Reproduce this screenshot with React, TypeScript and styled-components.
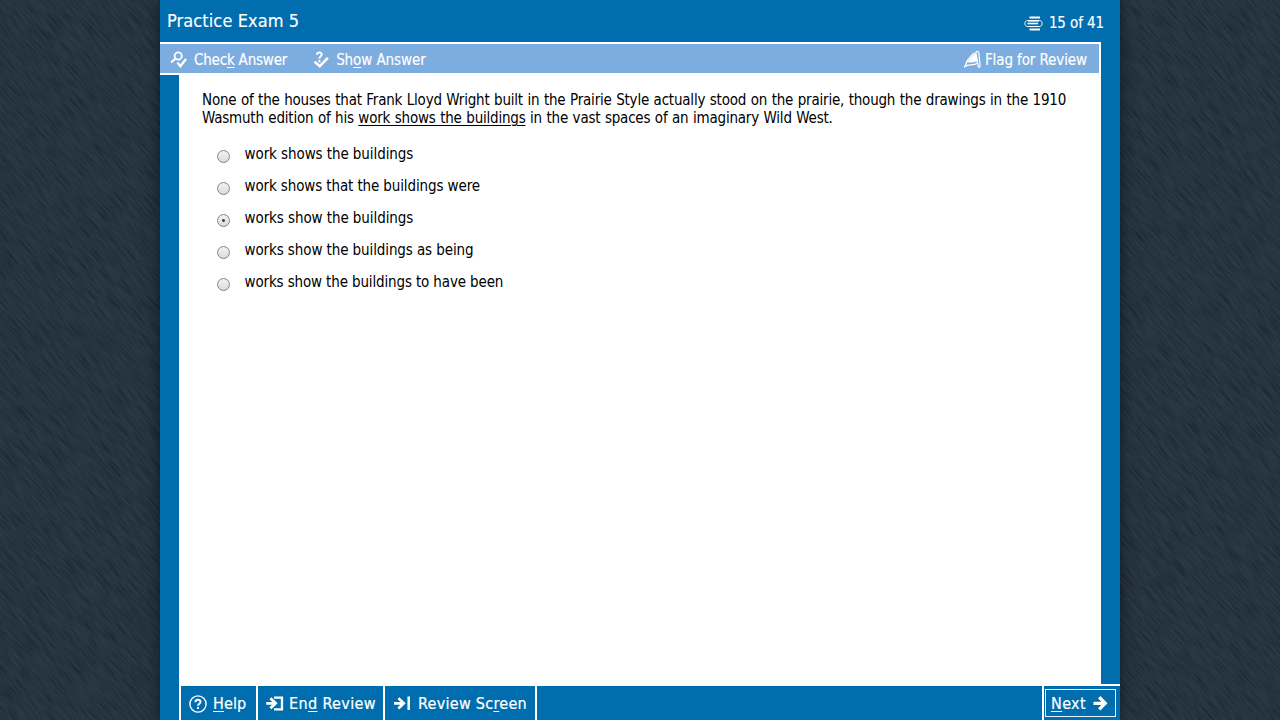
import React from "react";
import styled, { createGlobalStyle } from "styled-components";

const BLUE = "#006daf";
const LIGHT = "#7dacdf";

const Global = createGlobalStyle`
  * { box-sizing: border-box; }
  body { margin: 0; background: #283642; font-family: "DejaVu Sans Condensed", Tahoma, "DejaVu Sans", sans-serif; font-stretch: condensed; overflow: hidden; }
`;

const Desk = styled.div`
  position: relative;
  height: 720px;
  display: flex;
  justify-content: center;
  overflow: hidden;
  background: #283844;
`;

const Texture = styled.svg`
  position: absolute;
  left: -160px;
  top: -440px;
  width: 1600px;
  height: 1600px;
  transform: rotate(49deg);
`;

const Frame = styled.div`
  position: relative;
  width: 960px;
  height: 720px;
  display: flex;
  flex-direction: column;
  background: ${BLUE};
  box-shadow: 0 0 14px rgba(0, 0, 0, 0.55);
`;

const Header = styled.header`
  height: 42px;
  display: flex;
  justify-content: space-between;
  padding: 0 16px 0 7px;
  color: #fff;
  -webkit-text-stroke: 0.15px #fff;
`;

const Label = styled.span<{ $size: number; $spacing?: number }>`
  font-size: ${(p) => p.$size}px;
  letter-spacing: ${(p) => p.$spacing ?? 0}px;
  white-space: nowrap;
  u { text-underline-offset: 2px; text-decoration-thickness: 1px; }
`;

const Title = styled(Label)`
  line-height: 42px;
`;

const Progress = styled.div`
  display: flex;
  align-items: center;
  gap: 6px;
  padding-top: 4px;
`;

const Toolbar = styled.nav`
  width: 941px;
  height: 33px;
  display: flex;
  align-items: center;
  padding: 3px 12px 0 10px;
  border: 2px solid #fff;
  border-left: 0;
  background: ${LIGHT};
  color: #fff;
  -webkit-text-stroke: 0.15px #fff;

  svg { margin-top: -1px; }
`;

const Action = styled.div<{ $gap: number; $end?: boolean }>`
  display: flex;
  align-items: center;
  gap: ${(p) => p.$gap}px;
  margin-left: ${(p) => (p.$end ? "auto" : "0")};
  margin-right: ${(p) => (p.$end ? "0" : "25px")};
`;

const Sheet = styled.main`
  flex: 1;
  width: 922px;
  margin-left: 19px;
  padding: 16px 23px;
  background: #fff;
  color: #000;
`;

const Line = styled(Label)`
  display: block;
  line-height: 18px;
  word-spacing: 0.5px;
`;

const Choices = styled.div`
  display: flex;
  flex-direction: column;
  gap: 14px;
  padding: 18px 0 0 15px;
`;

const Choice = styled.label`
  height: 18px;
  display: flex;
  align-items: center;
  gap: 14.5px;
`;

const Radio = styled.span<{ $on?: boolean }>`
  width: 13px;
  height: 13px;
  margin-top: 4px;
  border: 1px solid #858585;
  border-radius: 50%;
  background: ${(p) => (p.$on ? "radial-gradient(circle, #444 0 1px, transparent 1.8px)," : "")}
    linear-gradient(#f3f3f3, #d9d9d9);
`;

const Footer = styled.footer`
  height: 34px;
  display: flex;
  margin-left: 19px;
  color: #fff;
  -webkit-text-stroke: 0.2px #fff;
`;

const FootButton = styled.div<{ $width: number; $gap: number }>`
  width: ${(p) => p.$width}px;
  display: flex;
  align-items: center;
  gap: ${(p) => p.$gap}px;
  padding: 1px 0 0 8px;
  border-left: 2px solid #fff;
`;

const Spacer = styled.div`
  flex: 1;
  border-left: 2px solid #fff;
`;

const NextCell = styled.div`
  width: 78px;
  height: 36px;
  margin-top: -2px;
  padding: 5px 0 0 1px;
  border-left: 2px solid #fff;
  background: linear-gradient(#fff, #fff) 0 0 / 100% 2px no-repeat;
`;

const NextButton = styled.div`
  width: 71px;
  height: 28px;
  display: flex;
  align-items: center;
  gap: 7px;
  padding: 1px 0 0 5px;
  border: 1px solid #e8f2fa;
`;

const CheckIcon = () => (
  <svg width="18" height="18" viewBox="0 0 18 18" fill="none" stroke="#fff">
    <circle cx="8.2" cy="5" r="3.6" strokeWidth="1.8" />
    <path d="M5.6 7.4 1 11.6" strokeWidth="2" />
    <path d="M7.4 11.6 10.4 15.2 16 8" strokeWidth="2.3" />
  </svg>
);

const ShowIcon = () => (
  <svg width="18" height="18" viewBox="-1.5 0 18 18" fill="none" stroke="#fff">
    <path d="M3.4 3.8C3.6.6 8.4.7 8.2 3.6 8 5.5 5.9 5.4 5.9 7.8M5.9 9V11.2" strokeWidth="2" />
    <path d="M1 10.6 6.2 15.2 14.4 6.8" strokeWidth="2.5" />
  </svg>
);

const FlagIcon = () => (
  <svg width="18" height="19" viewBox="0 0 18 19" fill="none" stroke="#fff">
    <path d="M4.2 11.5C6.8 9.5 7.6 6 11.2 4.8L13 10.8C10.5 10.6 8.6 12.8 4.2 11.5Z" fill="#fff" strokeWidth="1.4" />
    <path d="M12 2.2C13.6.6 14.8 1.6 14.8 3.2L16.2 16.2C15.8 17.6 14.4 17.8 14.2 16.4L12 3.4Z" strokeWidth="1.2" />
    <path d="M11.4 3C6.8 4 6.4 8 3.6 10L.9 16.6C5 13.4 9 16.6 13.6 13" strokeWidth="1.3" />
  </svg>
);

const PagesIcon = () => (
  <svg width="19" height="15" viewBox="0 0 19 15" fill="none" stroke="#fff">
    <path d="M5.5 1.5H16M5.5 13.5H16" strokeWidth="1.8" />
    <path d="M15.5 4.5H3.5C0 4.5 0 10.5 3.5 10.5H15.5C19 10.5 19 4.5 15.5 4.5" strokeWidth="1" />
    <path d="M3.5 7.5H14" strokeWidth="1.6" />
    <path d="M4 5.5H15" strokeWidth=".6" />
  </svg>
);

const HelpIcon = () => (
  <svg width="18" height="18" viewBox="0 0 18 18" fill="none" stroke="#fff">
    <circle cx="9" cy="9" r="8.1" strokeWidth="1.4" />
    <path d="M6.4 7.2C6.5 3.8 11.6 4 11.5 7 11.4 8.8 9 8.7 9 10.8M9 12V14" strokeWidth="2" />
  </svg>
);

const EndIcon = () => (
  <svg width="18" height="16" viewBox="0 0 18 16" fill="none" stroke="#fff">
    <path d="M.2 7.3H9.5M4.4 2.3 9.6 7.3 4.4 12.3" strokeWidth="2.8" />
    <path d="M8 1.6H16V13.4H8" strokeWidth="2.3" />
  </svg>
);

const ReviewIcon = () => (
  <svg width="18" height="16" viewBox="0 0 18 16" fill="none" stroke="#fff">
    <path d="M1 7.3H10.5M5.4 2.1 10.8 7.3 5.4 12.5" strokeWidth="2.7" />
    <path d="M15.7.5V14" strokeWidth="2.5" />
  </svg>
);

const ArrowIcon = () => (
  <svg width="15" height="16" viewBox="0 0 15 16" fill="none" stroke="#fff">
    <path d="M.5 7.3H12M6.2 1.2 12.2 7.3 6.2 13.4" strokeWidth="3.3" />
  </svg>
);

const choices = [
  { text: "work shows the buildings", spacing: -0.08 },
  { text: "work shows that the buildings were", spacing: -0.12 },
  { text: "works show the buildings", spacing: -0.08 },
  { text: "works show the buildings as being", spacing: -0.1 },
  { text: "works show the buildings to have been", spacing: -0.14 },
];

export default function App() {
  return (
    <>
      <Global />
      <Desk>
        <Texture aria-hidden="true">
          <filter id="grain" x="0" y="0" width="100%" height="100%" colorInterpolationFilters="sRGB">
            <feTurbulence type="fractalNoise" baseFrequency="0.04 0.8" numOctaves="2" seed="4" />
            <feColorMatrix values="0 0 0 0 0.08  0 0 0 0 0.12  0 0 0 0 0.16  1.5 0 0 0 -0.6" />
          </filter>
          <rect width="1600" height="1600" filter="url(#grain)" />
        </Texture>
        <Frame>
          <Header>
            <Title $size={18} $spacing={0.1}>Practice Exam 5</Title>
            <Progress>
              <PagesIcon />
              <Label $size={15} $spacing={-0.1}>15 of 41</Label>
            </Progress>
          </Header>
          <Toolbar>
            <Action $gap={6}>
              <CheckIcon />
              <Label $size={15} $spacing={-0.2}>Chec<u>k</u> Answer</Label>
            </Action>
            <Action $gap={6}>
              <ShowIcon />
              <Label $size={15} $spacing={-0.08}>Sh<u>o</u>w Answer</Label>
            </Action>
            <Action $gap={3} $end>
              <FlagIcon />
              <Label $size={15} $spacing={-0.1}>Flag for Review</Label>
            </Action>
          </Toolbar>
          <Sheet>
            <Line $size={15} $spacing={-0.21}>
              None of the houses that Frank Lloyd Wright built in the Prairie Style actually stood on the prairie, though the drawings in the 1910
            </Line>
            <Line $size={15} $spacing={-0.21}>
              Wasmuth edition of his <u>work shows the buildings</u> in the vast spaces of an imaginary Wild West.
            </Line>
            <Choices>
              {choices.map((choice, i) => (
                <Choice key={choice.text}>
                  <Radio $on={i === 2} />
                  <Label $size={15} $spacing={choice.spacing}>{choice.text}</Label>
                </Choice>
              ))}
            </Choices>
          </Sheet>
          <Footer>
            <FootButton $width={77} $gap={6}>
              <HelpIcon />
              <Label $size={16} $spacing={0.1}><u>H</u>elp</Label>
            </FootButton>
            <FootButton $width={127} $gap={5}>
              <EndIcon />
              <Label $size={16} $spacing={0.37}>En<u>d</u> Review</Label>
            </FootButton>
            <FootButton $width={152} $gap={7}>
              <ReviewIcon />
              <Label $size={16} $spacing={0.28}>Review Sc<u>r</u>een</Label>
            </FootButton>
            <Spacer />
            <NextCell>
              <NextButton>
                <Label $size={16} $spacing={0.35}><u>N</u>ext</Label>
                <ArrowIcon />
              </NextButton>
            </NextCell>
          </Footer>
        </Frame>
      </Desk>
    </>
  );
}
